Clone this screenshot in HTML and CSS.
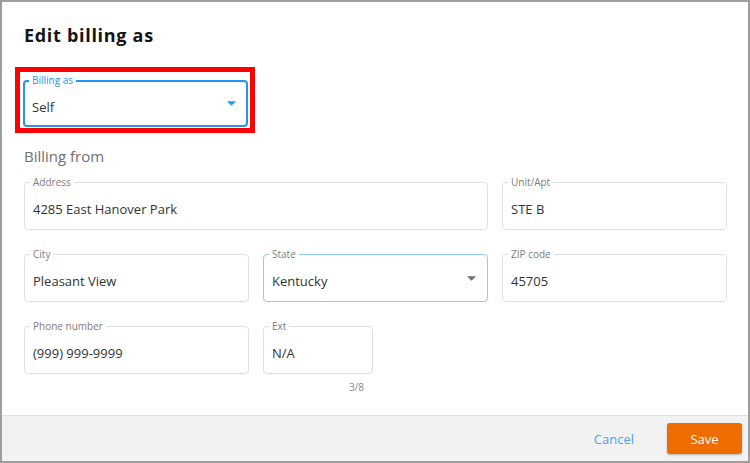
FILE: index.html
```html
<!DOCTYPE html>
<html lang="en">

<head>
    <meta charset="UTF-8">
    <meta name="viewport" content="width=device-width, initial-scale=1.0">
    <title>Edit billing as</title>

    <link rel="stylesheet" href="styles.css">
</head>

<body>
    <div class="dialog">
        <div class="dialog-body">
            <h2 class="dialog-title">Edit billing as</h2>

            <div class="highlight">
                <div class="field field--focused">
                    <span class="field-label">Billing as</span>
                    <span class="field-value">Self</span>
                    <svg class="caret" viewBox="0 0 10 5">
                        <path d="M0 0h10L5 5z" />
                    </svg>
                </div>
            </div>

            <h3 class="section-title">Billing from</h3>

            <div class="form-grid">
                <div class="field field--wide">
                    <span class="field-label">Address</span>
                    <span class="field-value">4285 East Hanover Park</span>
                </div>
                <div class="field">
                    <span class="field-label">Unit/Apt</span>
                    <span class="field-value">STE B</span>
                </div>

                <div class="field">
                    <span class="field-label">City</span>
                    <span class="field-value">Pleasant View</span>
                </div>
                <div class="field field--hover">
                    <span class="field-label">State</span>
                    <span class="field-value">Kentucky</span>
                    <svg class="caret" viewBox="0 0 10 5">
                        <path d="M0 0h10L5 5z" />
                    </svg>
                </div>
                <div class="field">
                    <span class="field-label">ZIP code</span>
                    <span class="field-value">45705</span>
                </div>

                <div class="field">
                    <span class="field-label">Phone number</span>
                    <span class="field-value">(999) 999-9999</span>
                </div>
                <div class="ext">
                    <div class="field">
                        <span class="field-label">Ext</span>
                        <span class="field-value">N/A</span>
                    </div>
                    <div class="helper">3/8</div>
                </div>
            </div>
        </div>

        <div class="dialog-footer">
            <button class="btn btn-text">Cancel</button>
            <button class="btn btn-primary">Save</button>
        </div>
    </div>
</body>

</html>
```

FILE: styles.css
```css
* {
    --blue: rgb(33, 150, 243);
    --light-blue: rgb(144, 202, 249);
    --orange: rgb(239, 108, 0);
    --line: rgb(224, 224, 224);
    box-sizing: border-box;
}

body {
    margin: 0;
    font-family: "Open Sans", "Noto Sans", sans-serif;
    color: rgb(51, 51, 51);
    background: white;
}

.dialog {
    display: flex;
    flex-direction: column;
    height: 463px;
    border: 2px solid rgb(158, 158, 158);
    background: white;
}

.dialog-body {
    flex: 1;
    padding: 21px 22px 0 22px;
}

.dialog-title {
    margin: 0;
    font-size: 18px;
    line-height: 24px;
    font-weight: 700;
    letter-spacing: 0.7px;
    color: rgb(20, 20, 20);
}

.highlight {
    width: 240px;
    margin: 20px 0 0 -9px;
    padding: 8px 2px 1px 3px;
    border: 5px solid rgb(255, 0, 0);
}

.section-title {
    margin: 13px 0 16px 0;
    font-size: 15px;
    line-height: 20px;
    font-weight: 400;
    color: rgb(112, 112, 112);
}

.form-grid {
    display: grid;
    grid-template-columns: repeat(3, 225px);
    column-gap: 14px;
    row-gap: 24px;
    align-items: start;
}

/* outlined text field */
.field {
    position: relative;
    display: flex;
    align-items: center;
    height: 48px;
    padding: 0 11px 0 8px;
    border: 1px solid var(--line);
    border-radius: 4px;
}

.field--wide {
    grid-column: span 2;
}

.field--hover {
    border-color: var(--light-blue);
}

.field--focused {
    height: 47px;
    padding: 0 10px 0 7px;
    border: 2px solid var(--blue);
}

.field-label {
    position: absolute;
    top: -7px;
    left: 5px;
    padding: 0 3px;
    background: white;
    font-size: 10px;
    line-height: 12px;
    color: rgb(125, 125, 125);
}

.field--focused .field-label {
    top: -8px;
    left: 4px;
    color: var(--blue);
}

.field-value {
    flex: 1;
    margin-top: 6px;
    font-size: 13px;
    line-height: 18px;
    white-space: nowrap;
}

.caret {
    width: 9px;
    height: 5px;
    fill: rgb(110, 110, 110);
}

.field--focused .caret {
    fill: var(--blue);
}

.ext {
    width: 110px;
}

.helper {
    margin-top: 7px;
    padding-right: 9px;
    text-align: right;
    font-size: 10px;
    line-height: 12px;
    color: rgb(136, 136, 136);
}

.dialog-footer {
    display: flex;
    justify-content: flex-end;
    align-items: center;
    gap: 25px;
    height: 46px;
    padding-right: 6px;
    border-top: 1px solid var(--line);
    background: rgb(242, 242, 242);
}

.btn {
    border: none;
    font-family: inherit;
    font-size: 13px;
    cursor: pointer;
}

.btn-text {
    padding: 0 8px;
    background: none;
    color: rgb(66, 165, 245);
}

.btn-primary {
    width: 75px;
    height: 31px;
    border-radius: 3px;
    background: var(--orange);
    color: white;
    font-weight: 500;
    box-shadow: 0 1px 2px rgba(0, 0, 0, 0.25);
}
```
